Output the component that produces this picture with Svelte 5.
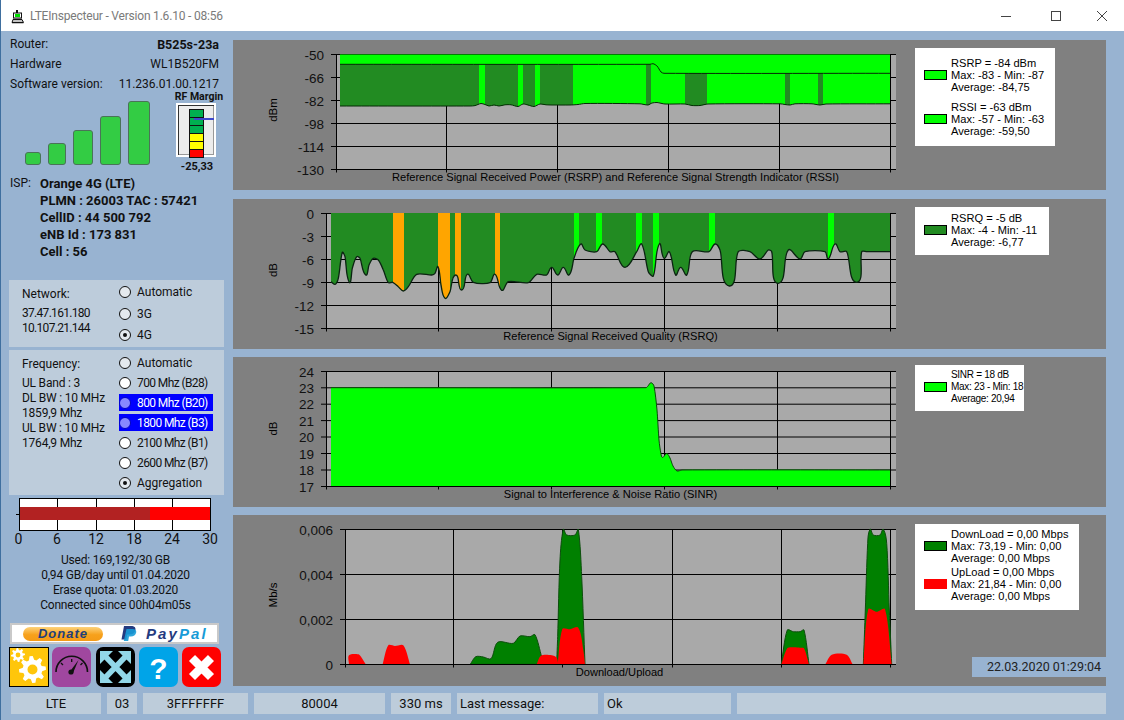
<script>
  function sp(p) {
    let d = `L${p[0][0]} ${p[0][1]}`;
    const unit = (u, v) => {
      const dx = v[0] - u[0], dy = v[1] - u[1], n = Math.hypot(dx, dy) || 1;
      return [dx / n, dy / n];
    };
    for (let i = 0; i < p.length - 1; i++) {
      const a = p[i - 1] || p[i], b = p[i], c = p[i + 1], e = p[i + 2] || c;
      const len = Math.hypot(c[0] - b[0], c[1] - b[1]) * 0.26;
      const t1 = unit(a, c), t2 = unit(b, e);
      d += `C${(b[0] + t1[0] * len).toFixed(1)} ${(b[1] + t1[1] * len).toFixed(1)} ${(c[0] - t2[0] * len).toFixed(1)} ${(c[1] - t2[1] * len).toFixed(1)} ${c[0].toFixed(1)} ${c[1].toFixed(1)}`;
    }
    return d;
  }
  const line = (p) => 'M' + sp(p).slice(1);
  const zm = (ox, oy, list) => list.map(([x, y]) => [ox + x / 3, oy + y / 3]);
  const rects = (list, a, b) => list.map(([x1, x2]) => `M${x1} ${a}H${x2}V${b}H${x1}Z`).join('');

  // Chart 1
  const rssi = [[340,64.3],[650,64.3],[653,63.7],[657,66],[661,72],[664,73.3],[890,73.3]];
  const rsrp = [[340,106],[470,106],[475,105.6],[481,103.5],[485,104.5],[489,106],[494,105],[499,106],[505,104.8],[511,104.8],[518,106.5],[523,104],[528,105],[534,106.5],[540,104],[546,104.8],[552,105],[570,105],[578,104.5],[585,103.5],[640,103.8],[648,105],[652,103],[657,102.5],[665,104],[685,104],[692,105.5],[700,105.5],[708,104],[780,103.8],[785,104.5],[790,105],[795,103.8],[812,103.8],[820,105],[826,104],[890,103.8]];
  const between = `M340 64.3${sp(rssi)}${sp([...rsrp].reverse())}Z`;

  // Chart 2
  const rsrq = [
    ...zm(235, 195, [[288,260],[300,268],[310,250],[322,172],[330,185],[343,262],[352,220],[365,185],[375,190],[392,240],[402,210],[415,190],[430,195],[445,225],[460,263],[473,262],[490,275],[505,288],[520,275],[545,238],[590,240],[600,235],[609,215],[618,270],[630,310],[645,290],[662,240],[680,285],[697,238],[715,262],[765,263],[780,238],[800,286],[820,260],[880,263],[905,238],[935,240],[950,217],[968,240],[985,217],[1002,240],[1017,190],[1037,147],[1050,165],[1085,170],[1103,147],[1125,170],[1140,170],[1170,217],[1205,170],[1220,147],[1240,230],[1255,243],[1273,147],[1287,190],[1303,170]]),
    ...zm(660, 195, [[47,240],[62,217],[80,240],[97,170],[147,170],[165,147],[180,165],[208,273],[235,170],[270,170],[300,192],[325,165],[335,170],[355,265],[385,165],[420,192],[435,170],[495,170],[505,192],[525,147],[540,170],[560,170],[590,262],[605,170],[620,170],[690,170]])
  ];
  const rsrqArea = `M331 213${sp(rsrq)}L890 213Z`;

  // Chart 3
  const sinr = [[331,387.7],[646,387.7],[648,386],[651,382.7],[654,386],[657,410],[659,440],[661,454],[662.5,457.5],[665,455],[667,453.5],[670,458],[673,466],[677,471],[682,470],[890,470]];
  const sinrArea = `M331 486${sp(sinr)}L890 486Z`;

  // Chart 4
  const A = (ox, pts) => zm(ox, 510, pts);
  const greens = [
    A(235, [[706,463],[722,440],[745,441],[768,446],[788,397],[835,400],[855,378],[885,380],[900,374],[920,440],[930,463]]),
    A(235, [[965,463],[968,380],[975,150],[985,58],[995,75],[1020,75],[1030,58],[1040,200],[1050,463]]),
    A(680, [[304,463],[322,360],[340,365],[360,365],[372,360],[387,463]]),
    A(680, [[550,463],[556,300],[563,100],[570,58],[580,75],[600,75],[610,58],[620,100],[628,300],[635,463]])
  ];
  const reds = [
    A(235, [[342,463],[342,436],[370,433],[378,440],[392,463]]),
    A(235, [[443,463],[460,406],[480,408],[505,406],[525,463]]),
    A(235, [[905,463],[918,437],[950,436],[965,443],[970,463]]),
    A(235, [[968,463],[982,357],[1005,358],[1030,353],[1045,420],[1050,463]]),
    A(680, [[304,463],[322,415],[340,412],[360,413],[372,415],[387,463]]),
    A(680, [[436,463],[455,434],[500,434],[518,463]]),
    A(680, [[550,463],[565,297],[590,305],[615,297],[635,463]])
  ];
  const closed = (p) => line(p) + 'Z';

  const charts = [
    {
      name: 'one', top: 40, h: 150, axis: 336, bottom: 169.5,
      ticks: [['-50',54.5],['-66',77.5],['-82',100.5],['-98',123.5],['-114',146.5],['-130',169.5]],
      vs: [446.5,557.5,668.5,779.5,890.5], unit: 'dBm', unitY: 110,
      title: 'Reference Signal Received Power (RSRP) and Reference Signal Strength Indicator (RSSI)', tx: 615.5, ty: 181,
      clip: between,
      layers: [
        { d: `M340 54.5${sp(rsrp)}L890 54.5Z`, fill: '#00ff00' },
        { d: rects([[340,479],[485,518],[523,535],[540,573],[646,651],[685,707],[785,790],[818,823]], 54, 170), fill: '#228b22', clip: true },
        { d: line(rssi), fill: 'none', stroke: '#052a05' },
        { d: line(rsrp), fill: 'none', stroke: '#052a05' }
      ],
      legend: [
        { lines: ['RSRP = -84 dBm','Max: -83 - Min: -87','Average: -84,75'], color: '#00ff00' },
        { lines: ['RSSI = -63 dBm','Max: -57 - Min: -63','Average: -59,50'], color: '#00ff00' }
      ],
      legendClass: 'l-one'
    },
    {
      name: 'two', top: 199, h: 150, axis: 326, bottom: 328.5,
      ticks: [['0',213.5],['-3',236.5],['-6',259.5],['-9',282.5],['-12',305.5],['-15',328.5]],
      vs: [438.5,551.5,664.5,777.5,890.5], unit: 'dB', unitY: 270,
      title: 'Reference Signal Received Quality (RSRQ)', tx: 610.5, ty: 340,
      clip: rsrqArea,
      layers: [
        { d: rsrqArea, fill: '#228b22' },
        { d: rects([[393,404],[438,450],[455,461],[495,500]], 213, 329), fill: '#ffa500', clip: true },
        { d: rects([[574,579],[596,602],[636,642],[653,659],[709,715],[828,834]], 213, 329), fill: '#00ff00', clip: true },
        { d: line(rsrq), fill: 'none', stroke: '#0b2412', sw: 1.3 }
      ],
      legend: [{ lines: ['RSRQ = -5 dB','Max: -4 - Min: -11','Average: -6,77'], color: '#228b22' }],
      legendClass: 'l-two'
    },
    {
      name: 'three', top: 357, h: 150, axis: 326, bottom: 486.5,
      ticks: [['24',371.5],['23',387.8],['22',404.2],['21',420.6],['20',437],['19',453.5],['18',470],['17',486.5]],
      vs: [438.5,551.5,664.5,777.5,890.5], unit: 'dB', unitY: 428.5,
      title: 'Signal to Interference & Noise Ratio (SINR)', tx: 610.5, ty: 498,
      layers: [
        { d: sinrArea, fill: '#00ff00' },
        { d: line(sinr), fill: 'none', stroke: '#0a4a0a' }
      ],
      legend: [{ lines: ['SINR = 18 dB','Max: 23 - Min: 18','Average: 20,94'], color: '#00ff00' }],
      legendClass: 'l-three'
    },
    {
      name: 'four', top: 515, h: 171, axis: 345, bottom: 664.5,
      ticks: [['0,006',529.5],['0,004',574.5],['0,002',619.5],['0',664.5]],
      vs: [453.5,562.5,672.5,781.5,890.5], unit: 'Mb/s', unitY: 595,
      title: 'Download/Upload', tx: 619.5, ty: 676,
      layers: [
        ...greens.map((p) => ({ d: closed(p), fill: '#008000', stroke: '#0d4d0d' })),
        ...reds.map((p) => ({ d: closed(p), fill: '#ff0000' }))
      ],
      legend: [
        { lines: ['DownLoad = 0,00 Mbps','Max: 73,19 - Min: 0,00','Average: 0,00 Mbps'], color: '#008000' },
        { lines: ['UpLoad = 0,00 Mbps','Max: 21,84 - Min: 0,00','Average: 0,00 Mbps'], color: '#ff0000', noBorder: true }
      ],
      legendClass: 'l-four',
      stamp: '22.03.2020 01:29:04'
    }
  ];

  const bars = [[16,13],[18,22],[20,35],[21,49],[22,64]];
  const rfCells = ['g','g','g','y','y','r'];
  const networkRadios = [
    { label: 'Automatic', soft: true },
    { label: '3G', soft: true },
    { label: '4G', soft: true, on: true }
  ];
  const freqRadios = [
    { label: 'Automatic', soft: true },
    { label: '700 Mhz (B28)', tight: true },
    { label: '800 Mhz (B20)', sel: true, tight: true },
    { label: '1800 Mhz (B3)', sel: true, tight: true },
    { label: '2100 Mhz (B1)', tight: true },
    { label: '2600 Mhz (B7)', tight: true },
    { label: 'Aggregation', soft: true, on: true }
  ];
  const freqInfo = ['UL Band : 3','DL BW : 10 MHz','1859,9 Mhz','UL BW : 10 MHz','1764,9 Mhz'];
  const status = ['LTE','03','3FFFFFFF','80004','330 ms','Last message:','Ok',''];
  const leftCells = [5, 6];
  const gaugeLabels = [['0',18.5],['6',57],['12',96],['18',134],['24',172],['30',210]];

  function gear(cx, cy, ro, ri, hole, n) {
    let d = '';
    const step = (Math.PI * 2) / n;
    for (let i = 0; i < n; i++) {
      const a = i * step - step / 2;
      const pts = [[ri, a + step * 0.02], [ro, a + step * 0.22], [ro, a + step * 0.52], [ri, a + step * 0.72]];
      for (const [r, t] of pts) {
        d += `${d ? 'L' : 'M'}${(cx + r * Math.cos(t)).toFixed(2)} ${(cy + r * Math.sin(t)).toFixed(2)}`;
      }
    }
    d += `Z M${cx + hole} ${cy}A${hole} ${hole} 0 1 0 ${cx - hole} ${cy}A${hole} ${hole} 0 1 0 ${cx + hole} ${cy}Z`;
    return d;
  }
</script>

{#snippet radio(r)}
  <div class="radio-row" class:selected={r.sel}>
    <span class="radio" class:soft={r.soft} class:picked={r.sel}>
      {#if r.on}<span class="dot"></span>{/if}
    </span>
    <span class:tight={r.tight}>{r.label}</span>
  </div>
{/snippet}

<div class="window">
  <header class="titlebar">
    <svg class="app-icon" width="14" height="14" viewBox="0 0 14 14">
      <rect x="5" y="0" width="2" height="3" fill="#111" />
      <rect x="2.500" y="3" width="8" height="5" fill="#fff" stroke="#111" />
      <rect x="4" y="4" width="5" height="3" fill="#00e000" />
      <path d="M1 12.500h11.500M2 9.500h9" stroke="#111" stroke-width="1.400" fill="none" />
      <path d="M1 12.500L2 9.500M12.500 12.500L11 9.500" stroke="#111" fill="none" />
    </svg>
    <span class="title-text">LTEInspecteur - Version 1.6.10 - 08:56</span>
    <div class="win-buttons">
      <svg class="win-min" width="12" height="12" viewBox="0 0 12 12"><path d="M1 6.500h10" stroke="#444" /></svg>
      <svg width="12" height="12" viewBox="0 0 12 12"><rect x="1.500" y="1.500" width="9" height="9" fill="none" stroke="#444" /></svg>
      <svg width="12" height="12" viewBox="0 0 12 12"><path d="M1 1l10 10M11 1L1 11" stroke="#444" /></svg>
    </div>
  </header>

  <div class="main">
    <aside class="left">
      <div class="info">
        <div class="info-row"><span>Router:</span><b>B525s-23a</b></div>
        <div class="info-row"><span>Hardware</span><span>WL1B520FM</span></div>
        <div class="info-row"><span>Software version:</span><span>11.236.01.00.1217</span></div>
      </div>

      <div class="meters">
        <div class="bars">
          {#each bars as [w, h]}
            <span class="bar" style="width:{w}px;height:{h}px"></span>
          {/each}
        </div>
        <div class="rf">
          <div class="rf-title">RF Margin</div>
          <div class="rf-box">
            <div class="rf-stack">
              {#each rfCells as c}<span class="rf-cell {c}"></span>{/each}
            </div>
            <span class="rf-needle"></span>
          </div>
          <div class="rf-value">-25,33</div>
        </div>
      </div>

      <div class="isp">
        <span class="isp-label">ISP:</span>
        <div class="isp-values">
          <div>Orange 4G (LTE)</div>
          <div>PLMN : 26003 TAC : 57421</div>
          <div>CellID : 44 500 792</div>
          <div>eNB Id : 173 831</div>
          <div>Cell : 56</div>
        </div>
      </div>

      <section class="box network">
        <div class="box-text">
          <div class="box-head">Network:</div>
          <div class="ip">37.47.161.180</div>
          <div class="ip">10.107.21.144</div>
        </div>
        <div class="radios net-radios">
          {#each networkRadios as r}{@render radio(r)}{/each}
        </div>
      </section>

      <section class="box frequency">
        <div class="box-text">
          <div class="box-head">Frequency:</div>
          {#each freqInfo as t}<div class="freq-line">{t}</div>{/each}
        </div>
        <div class="radios freq-radios">
          {#each freqRadios as r}{@render radio(r)}{/each}
        </div>
      </section>

      <svg class="gauge" width="216" height="51" viewBox="9 498 216 51">
        <rect x="19.500" y="498.500" width="191" height="32" fill="#fff" stroke="#000" />
        {#each [57.5,96.5,134.5,172.5] as x}
          <path d="M{x} 498v32" stroke="#000" />
        {/each}
        <rect x="20" y="507" width="130" height="13" fill="#b22222" />
        <rect x="150" y="507" width="60" height="13" fill="#ff0000" />
        <path d="M16 514.500h3" stroke="#000" />
        {#each gaugeLabels as [t, x]}
          <text {x} y="544" text-anchor="middle">{t}</text>
        {/each}
      </svg>

      <div class="quota">
        <div>Used: 169,192/30 GB</div>
        <div>0,94 GB/day until 01.04.2020</div>
        <div>Erase quota: 01.03.2020</div>
        <div>Connected since 00h04m05s</div>
      </div>

      <div class="donate">
        <span class="pill">Donate</span>
        <svg class="pp-mark" width="18" height="15" viewBox="0 0 18 15">
          <path d="M4 0h7c3.500 0 5 1.600 4.400 4.200C14.800 7 12.600 8.600 9.400 8.600H7.200L6.200 13.500H1.500Z" fill="#253b80" />
          <path d="M6.500 3h6c2.600 0 4.200 1.200 3.700 3.600-.6 2.600-2.600 4-5.400 4H9L8.200 15H3.800Z" fill="#179bd7" opacity=".9" />
        </svg>
        <span class="pp-text"><span class="pay">Pay</span><span class="pal">Pal</span></span>
      </div>

      <div class="tools">
        <svg class="tool settings" width="40" height="40" viewBox="0 0 40 40">
          <rect x=".5" y=".5" width="39" height="39" fill="#ffc60b" stroke="#000" />
          <path d={gear(23.5, 22.5, 13.5, 9.8, 5, 8)} fill="#fff" fill-rule="evenodd" />
          <path d={gear(9, 8, 7, 5, 2.4, 8)} fill="#fff" fill-rule="evenodd" />
        </svg>
        <svg class="tool gaugeicon" width="39" height="40" viewBox="0 0 39 40">
          <rect width="39" height="40" rx="7" fill="#a0479f" />
          <path d="M4 25A15.500 15.500 0 0 1 35.500 25" fill="none" stroke="#111" stroke-width="1.600" />
          <path d="M19.700 12v3M9 16l2 2M30.500 16l-2 2" stroke="#111" stroke-width="1.300" />
          <path d="M18 24.500L26.500 13L21 26Z" fill="#111" />
          <circle cx="19" cy="25" r="2.600" fill="#111" />
        </svg>
        <svg class="tool" width="39" height="40" viewBox="0 0 39 40">
          <rect width="39" height="40" rx="7" fill="#000" />
          <g fill="#92d7e8">
            <path d="M4 4h13l-13 13Z" /><path d="M35 4H22l13 13Z" />
            <path d="M4 36h13L4 23Z" /><path d="M35 36H22l13-13Z" />
          </g>
          <path d="M8 8l23 24M31 8L8 32" stroke="#92d7e8" stroke-width="5.500" />
        </svg>
        <svg class="tool" width="39" height="40" viewBox="0 0 39 40">
          <rect width="39" height="40" rx="7" fill="#00a4e8" />
          <text class="qmark" x="19.500" y="32" text-anchor="middle">?</text>
        </svg>
        <svg class="tool" width="39" height="40" viewBox="0 0 39 40">
          <rect width="39" height="40" rx="7" fill="#ff0000" />
          <path d="M10 11l19 19M29 11L10 30" stroke="#fff" stroke-width="8.500" />
        </svg>
      </div>
    </aside>

    <div class="charts">
      {#each charts as c}
        <section class="panel {c.name}">
          <svg class="plot" width="673" height={c.h} viewBox="233 {c.top} 673 {c.h}">
            {#if c.clip}
              <defs><clipPath id="clip-{c.name}"><path d={c.clip} /></clipPath></defs>
            {/if}
            <rect x={c.axis} y={c.ticks[0][1]} width={896 - c.axis} height={c.bottom - c.ticks[0][1]} fill="#a9a9a9" />
            {#each c.ticks as [t, y]}
              <path d="M{c.axis - 5} {y}H896" stroke="#000" />
              <text class="tick" x={c.axis - 12} y={y + 5} text-anchor="end">{t}</text>
            {/each}
            {#each c.vs as x}
              <path d="M{x} {c.ticks[0][1]}V{c.bottom + 3}" stroke="#000" />
            {/each}
            {#each c.layers as l}
              <path d={l.d} fill={l.fill} stroke={l.stroke || 'none'} stroke-width={l.sw || 1} clip-path={l.clip ? `url(#clip-${c.name})` : undefined} />
            {/each}
            <path d="M{c.axis - 5} {c.bottom}H896M{c.axis + .5} {c.ticks[0][1]}V{c.bottom + 3}" stroke="#000" />
            <text class="unit" transform="translate(277 {c.unitY}) rotate(-90)" text-anchor="middle">{c.unit}</text>
            <text class="chart-title" x={c.tx} y={c.ty} text-anchor="middle">{c.title}</text>
          </svg>
          <div class="legend {c.legendClass}">
            {#each c.legend as g}
              <div class="legend-group">
                <span class="swatch" class:plain={g.noBorder} style="background:{g.color}"></span>
                <div class="legend-lines">
                  {#each g.lines as t}<div>{t}</div>{/each}
                </div>
              </div>
            {/each}
          </div>
          {#if c.stamp}<div class="stamp">{c.stamp}</div>{/if}
        </section>
      {/each}
    </div>
  </div>

  <footer class="status">
    {#each status as s, i}
      <div class="cell" class:start={leftCells.includes(i)}>{s}</div>
    {/each}
  </footer>
</div>

<style>
  :global(body) { margin: 0; background: #98b3d1; }
  .window {
    width: 1124px; height: 720px; box-sizing: border-box; overflow: hidden;
    border-left: 1px solid #3f6f9f; background: #98b3d1;
    font: 12px Roboto, sans-serif; color: #111;
  }
  .titlebar { height: 31px; background: #fff; display: flex; align-items: center; margin-left: -1px; }
  .app-icon { margin: 0 5px 0 11px; position: relative; top: 1px; }
  .title-text { color: #7a7a7a; font-size: 12px; letter-spacing: -.2px; }
  .win-buttons { margin-left: auto; display: flex; gap: 34px; margin-right: 16px; }
  .win-min { margin-right: 4px; }
  .main { display: flex; height: 662px; }
  .left { width: 232px; box-sizing: border-box; padding: 3px 0 0 8px; flex: none; }
  .info { padding: 0 14px 0 1px; }
  .info-row { height: 20px; display: flex; align-items: center; justify-content: space-between; }
  .info-row b { font-size: 12.500px; }
  .meters { height: 78px; display: flex; }
  .bars { display: flex; gap: 7px; align-items: flex-end; height: 71px; margin-left: 16px; }
  .bar { background: #33cc44; border: 1px solid #4a7358; border-radius: 3px; box-sizing: border-box; }
  .rf { width: 50px; margin-left: 24px; margin-top: -3px; text-align: center; font-size: 10.500px; font-weight: 700; }
  .rf-title { line-height: 12px; white-space: nowrap; }
  .rf-box {
    width: 40px; height: 54px; box-sizing: border-box; margin: 0 0 0 2px; background: #ececec;
    border: 2px solid #fff; box-shadow: inset 1px 1px 0 #333, inset -1px -1px 0 #999;
    padding-top: 4px; position: relative;
  }
  .rf-stack { width: 15px; margin-left: 11px; border: 1px solid #111; border-bottom: 0; box-sizing: border-box; }
  .rf-cell { display: block; height: 7px; border-bottom: 1px solid #111; }
  .rf-cell.g { background: #00b050; }
  .rf-cell.y { background: #ffff00; }
  .rf-cell.r { background: #ff0000; }
  .rf-needle { position: absolute; left: 16px; top: 13px; width: 20px; height: 2px; background: #3f48cc; }
  .rf-value { margin-top: 3px; margin-left: -4px; font-size: 11px; }
  .isp { display: flex; margin: 3px 0 0 1px; height: 85px; }
  .isp-label { width: 30px; line-height: 17px; }
  .isp-values { font-weight: 700; line-height: 17px; font-size: 13px; }
  .box { background: #bdccdb; width: 215px; display: grid; grid-template-columns: 110px 94px; }
  .network { height: 67px; margin-top: 20px; }
  .frequency { height: 145px; margin-top: 3px; }
  .box-text { padding: 6.500px 0 0 13px; line-height: 15px; white-space: nowrap; }
  .box-head { margin-bottom: 4px; }
  .ip { letter-spacing: -.7px; }
  .freq-line { letter-spacing: -.2px; }
  .radios { display: flex; flex-direction: column; }
  .net-radios { gap: 4.500px; padding-top: 3.500px; }
  .freq-radios { gap: 3px; padding-top: 4px; }
  .radio-row { height: 17px; display: flex; align-items: center; gap: 6px; white-space: nowrap; }
  .radio-row.selected { background: #0000ff; color: #fff; }
  .tight { letter-spacing: -.6px; }
  .radio {
    width: 12px; height: 12px; border-radius: 50%; border: 1px solid #111; background: #fff;
    box-sizing: border-box; display: flex; align-items: center; justify-content: center; flex: none;
  }
  .radio.soft { background: #e4e9ee; }
  .radio.picked { background: #8888ff; border-color: #0000c0; }
  .dot { width: 4px; height: 4px; border-radius: 50%; background: #111; }
  .gauge { display: block; margin-top: 3px; }
  .gauge text { font: 14px Roboto, sans-serif; fill: #111; }
  .quota { margin-top: 4px; width: 213px; text-align: center; line-height: 15px; white-space: nowrap; letter-spacing: -.2px; }
  .donate {
    margin: 10px 0 0 1px; width: 209px; height: 21px; box-sizing: border-box; background: #fff;
    border: 2px solid #c9c9c9; display: flex; align-items: center; padding-left: 11px;
  }
  .pill {
    width: 80px; height: 14px; border-radius: 7px; text-align: center;
    background: linear-gradient(#fdd27a, #f7a11c 55%, #f49b17);
    color: #1f3f7a; font: italic 700 13px/14px "Liberation Sans", sans-serif; letter-spacing: 1px;
  }
  .pp-mark { margin-left: 17px; }
  .pp-text { margin-left: 8px; font: italic 700 15px "Liberation Sans", sans-serif; letter-spacing: 2.100px; }
  .pay { color: #253b80; }
  .pal { color: #179bd7; }
  .tools { margin-top: 3px; display: flex; gap: 4px; }
  .tool { display: block; }
  .gaugeicon { margin: 0 1px 0 -1px; }
  .qmark { font: 700 30px "Liberation Sans", sans-serif; fill: #fff; }
  .charts { width: 873px; flex: none; padding-top: 9px; }
  .panel { background: #808080; display: flex; align-items: flex-start; position: relative; }
  .panel.one, .panel.two, .panel.three { height: 150px; }
  .panel.two { margin-top: 9px; }
  .panel.three, .panel.four { margin-top: 8px; }
  .panel.four { height: 171px; }
  .plot { display: block; flex: none; }
  .tick { font: 13.500px "Liberation Sans", sans-serif; fill: #111; }
  .unit { font: 11.500px "Liberation Sans", sans-serif; fill: #000; }
  .chart-title { font: 11.100px "Liberation Sans", sans-serif; fill: #000; }
  .legend {
    margin-left: 9px; background: #fff; padding: 0 0 0 9px; box-sizing: border-box;
    font: 11.100px/12px "Liberation Sans", sans-serif; color: #000;
  }
  .l-one { width: 140px; height: 98px; margin-top: 8px; padding-top: 9px; }
  .l-one .legend-group + .legend-group { margin-top: 8px; }
  .l-two { height: 48px; margin-top: 8px; padding: 5px 12px 0 9px; }
  .l-three { width: 109px; height: 46px; margin-top: 8px; padding-top: 4px; font-size: 10px; letter-spacing: -.3px; }
  .l-four { width: 164px; height: 86px; margin-top: 9px; padding-top: 4px; }
  .l-four .legend-group + .legend-group { margin-top: 2px; }
  .legend-group { display: flex; align-items: center; gap: 4px; }
  .swatch { width: 23px; height: 10px; border: 1px solid #000; box-sizing: border-box; flex: none; }
  .swatch.plain { border: 0; }
  .legend-lines { white-space: nowrap; }
  .stamp {
    position: absolute; right: 0; top: 142px; width: 134px; height: 20px; box-sizing: border-box;
    padding-right: 5px; background: #98b3d1; text-align: right; line-height: 20px; font-size: 12.500px; color: #222;
  }
  .status {
    display: grid; grid-template-columns: 90px 30px 105px 131px 60px 141px 127px 369px; gap: 6px;
    height: 21px; padding-left: 10px;
  }
  .cell { background: #bdccda; text-align: center; line-height: 21px; font-size: 13px; white-space: nowrap; overflow: hidden; }
  .cell.start { text-align: left; padding-left: 3px; }
</style>
